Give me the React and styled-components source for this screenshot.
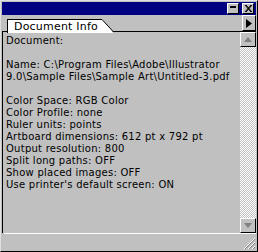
import React from 'react';
import styled, { createGlobalStyle } from 'styled-components';

const Global = createGlobalStyle`
  html, body { margin: 0; padding: 0; background: #c0c0c0; }
`;

const Window = styled.div`
  width: 258px;
  height: 252px;
  box-sizing: border-box;
  background: #c0c0c0;
  border-top: 1px solid #dfdfdf;
  border-left: 1px solid #dfdfdf;
  border-right: 1px solid #000;
  border-bottom: 1px solid #000;
  padding: 1px;
  display: flex;
  flex-direction: column;
  font-family: "DejaVu Sans", "Liberation Sans", sans-serif;
`;

const TitleBar = styled.div`
  height: 13px;
  background: #000080;
  display: flex;
  align-items: center;
  justify-content: flex-end;
  gap: 3px;
  padding-right: 2px;
`;

const TitleButton = styled.div`
  width: 10px;
  height: 9px;
  background: #c0c0c0;
  border-top: 1px solid #fff;
  border-left: 1px solid #fff;
  border-right: 1px solid #000;
  border-bottom: 1px solid #000;
  display: flex;
  align-items: center;
  justify-content: center;
`;

const TabRow = styled.div`
  height: 16px;
  display: flex;
  align-items: flex-end;
  border-bottom: 1px solid #000;
  position: relative;
  padding-left: 5px;
`;

const Tab = styled.div`
  position: relative;
  height: 13px;
  margin-bottom: -1px;
  display: flex;
  align-items: center;
`;

const TabLabel = styled.div`
  height: 13px;
  background: #fff;
  border: 1px solid #000;
  border-right: none;
  border-bottom: none;
  padding: 0 4px 0 6px;
  font-size: 11px;
  line-height: 13px;
  letter-spacing: 0.2px;
  color: #000;
  white-space: nowrap;
`;

const MenuButton = styled.div`
  position: absolute;
  right: 0;
  top: 0;
  width: 14px;
  height: 16px;
  box-sizing: border-box;
  background: #c0c0c0;
  border-top: 1px solid #fff;
  border-left: 1px solid #fff;
  border-right: 1px solid #000;
  border-bottom: 1px solid #000;
  display: flex;
  align-items: center;
  justify-content: center;
`;

const Body = styled.div`
  flex: 1;
  display: flex;
  border-left: 1px solid #000;
  min-height: 0;
`;

const Content = styled.div`
  flex: 1;
  padding: 3px 0 0 3px;
  font-size: 10px;
  line-height: 12px;
  letter-spacing: 0.25px;
  color: #000;
  white-space: pre;
  overflow: hidden;
`;

const Line = styled.div`
  height: 12px;
`;

const Scrollbar = styled.div`
  width: 16px;
  display: flex;
  flex-direction: column;
  justify-content: space-between;
  background-color: #fff;
  background-image:
    linear-gradient(45deg, #c0c0c0 25%, transparent 25%, transparent 75%, #c0c0c0 75%),
    linear-gradient(45deg, #c0c0c0 25%, transparent 25%, transparent 75%, #c0c0c0 75%);
  background-size: 2px 2px;
  background-position: 0 0, 1px 1px;
`;

const ScrollButton = styled.div`
  height: 15px;
  box-sizing: border-box;
  background: #c0c0c0;
  border-top: 1px solid #fff;
  border-left: 1px solid #fff;
  border-right: 1px solid #000;
  border-bottom: 1px solid #000;
  display: flex;
  align-items: center;
  justify-content: center;
`;

const StatusBar = styled.div`
  height: 16px;
  border-top: 1px solid #fff;
  margin-left: 2px;
  display: flex;
  justify-content: flex-end;
  align-items: flex-end;
`;

const lines = [
  'Document:',
  '',
  'Name: C:\\Program Files\\Adobe\\Illustrator',
  '9.0\\Sample Files\\Sample Art\\Untitled-3.pdf',
  '',
  'Color Space: RGB Color',
  'Color Profile: none',
  'Ruler units: points',
  'Artboard dimensions: 612 pt x 792 pt',
  'Output resolution: 800',
  'Split long paths: OFF',
  'Show placed images: OFF',
  "Use printer's default screen: ON",
];

export default function App() {
  return (
    <>
      <Global />
      <Window>
        <TitleBar>
          <TitleButton>
            <svg width="8" height="7" viewBox="0 0 8 7">
              <rect x="1" y="1" width="6" height="2" fill="#000" />
            </svg>
          </TitleButton>
          <TitleButton>
            <svg width="8" height="7" viewBox="0 0 8 7">
              <path d="M1 0 L7 7 M7 0 L1 7 M2 0 L8 7 M8 0 L2 7" stroke="#000" strokeWidth="1" />
            </svg>
          </TitleButton>
        </TitleBar>
        <TabRow>
          <Tab>
            <TabLabel>Document Info</TabLabel>
            <svg width="12" height="14" viewBox="0 0 12 14" style={{ display: 'block' }}>
              <polygon points="0,0 0,14 12,14" fill="#fff" />
              <line x1="0" y1="0.5" x2="12" y2="13.5" stroke="#000" strokeWidth="1" />
            </svg>
          </Tab>
          <MenuButton>
            <svg width="6" height="9" viewBox="0 0 6 9">
              <polygon points="0,0 6,4.5 0,9" fill="#000" />
            </svg>
          </MenuButton>
        </TabRow>
        <Body>
          <Content>
            {lines.map((l, i) => (
              <Line key={i}>{l}</Line>
            ))}
          </Content>
          <Scrollbar>
            <ScrollButton>
              <svg width="8" height="5" viewBox="0 0 8 5">
                <polygon points="4,0 8,5 0,5" fill="#808080" />
              </svg>
            </ScrollButton>
            <ScrollButton>
              <svg width="8" height="5" viewBox="0 0 8 5">
                <polygon points="0,0 8,0 4,5" fill="#808080" />
              </svg>
            </ScrollButton>
          </Scrollbar>
        </Body>
        <StatusBar>
          <svg width="14" height="14" viewBox="0 0 14 14">
            <path d="M13 2 L2 13 M13 6 L6 13 M13 10 L10 13" stroke="#fff" strokeWidth="1" />
            <path d="M13 3 L3 13 M13 7 L7 13 M13 11 L11 13" stroke="#808080" strokeWidth="1" />
          </svg>
        </StatusBar>
      </Window>
    </>
  );
}
